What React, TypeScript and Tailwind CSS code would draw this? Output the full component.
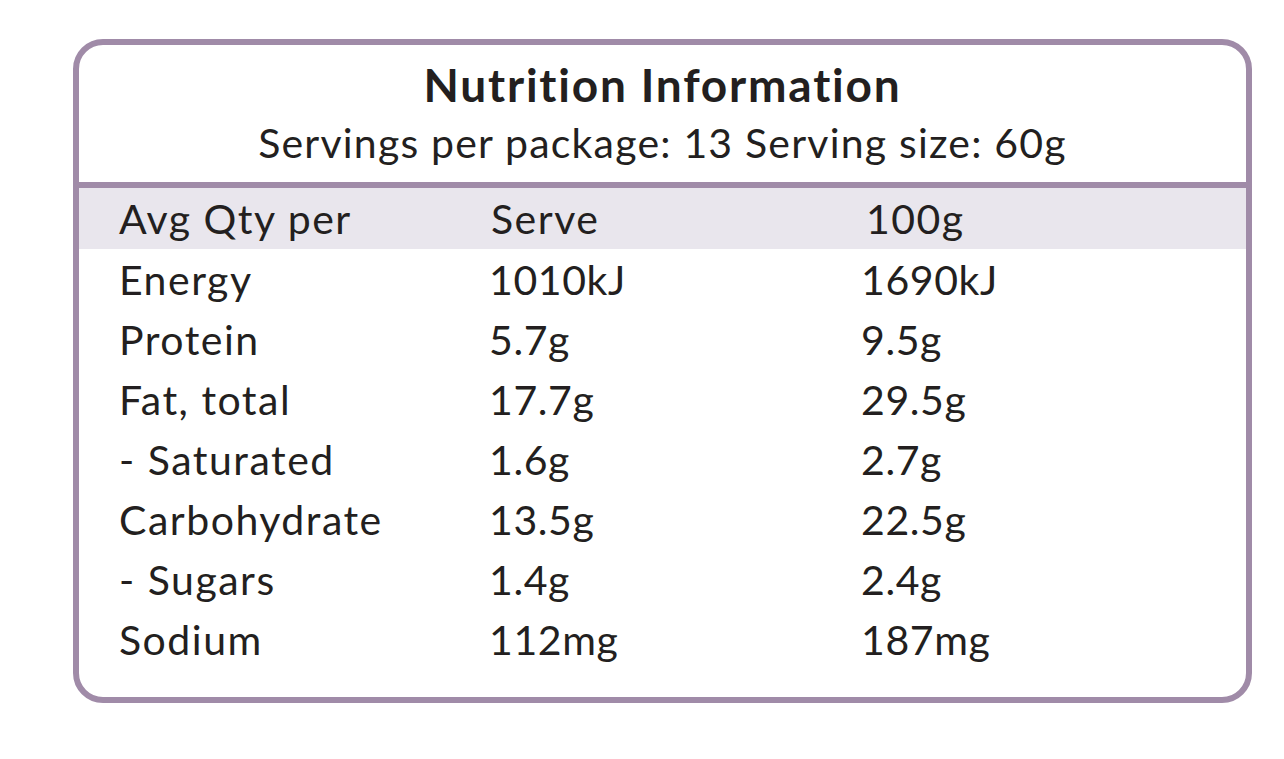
const rows: Array<[string, string, string]> = [
	['Energy', '1010kJ', '1690kJ'],
	['Protein', '5.7g', '9.5g'],
	['Fat, total', '17.7g', '29.5g'],
	['- Saturated', '1.6g', '2.7g'],
	['Carbohydrate', '13.5g', '22.5g'],
	['- Sugars', '1.4g', '2.4g'],
	['Sodium', '112mg', '187mg'],
]

export default function App() {
	return (
		<div className="w-[1284px] h-[759px] bg-white pl-[73px] pt-[39px] text-[#231f20] font-['Lato','DejaVu_Sans',sans-serif] [font-variant-ligatures:none]">
			<div className="w-[1179px] h-[664px] border-[6px] border-[#a08ba8] rounded-[30px] overflow-hidden">
				<div className="h-[143px] border-b-[6px] border-[#a08ba8] flex flex-col items-center">
					<h1 className="mt-[13px] text-[46px] leading-[54px] font-bold tracking-[1.8px]">Nutrition Information</h1>
					<p className="mt-[7px] text-[41px] leading-[48px] tracking-[1.2px]">Servings per package: 13 Serving size: 60g</p>
				</div>
				<div className="grid grid-cols-[370px_372px_1fr] pl-[40px] pb-[10px] h-[61px] items-center bg-[#e9e6ed] text-[41px] tracking-[1.5px]">
					<span>Avg Qty per</span>
					<span className="pl-[2px]">Serve</span>
					<span className="pl-[5px]">100g</span>
				</div>
				{rows.map(([label, serve, per100]) => (
					<div key={label} className="grid grid-cols-[370px_372px_1fr] pl-[40px] pb-[10px] h-[60px] items-center text-[41px]">
						<span className="tracking-[1.5px]">{label}</span>
						<span className="tracking-[0.6px]">{serve}</span>
						<span className="tracking-[0.6px]">{per100}</span>
					</div>
				))}
			</div>
		</div>
	)
}
